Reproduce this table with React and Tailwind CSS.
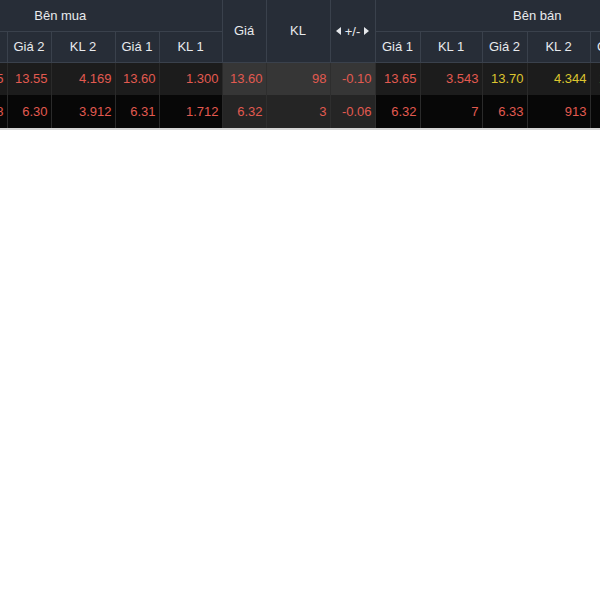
import React from "react";

const buyCols = ["Giá 3", "KL 3", "Giá 2", "KL 2", "Giá 1", "KL 1"];
const sellCols = ["Giá 1", "KL 1", "Giá 2", "KL 2", "Giá 3", "KL 3"];

// column widths in px, table is scrolled so Bên mua's first two columns sit off to the left
const widths = [44, 64, 44, 64, 44, 63, 44, 64, 45, 45, 62, 45, 63, 45, 64];

const rows = [
  {
    buy: ["13.50", "2.385", "13.55", "4.169", "13.60", "1.300"],
    mid: ["13.60", "98", "-0.10"],
    sell: ["13.65", "3.543", "13.70", "4.344", "13.75", "2.120"],
    sellColor: ["red", "red", "yellow", "yellow", "yellow", "yellow"],
  },
  {
    buy: ["6.29", "1.908", "6.30", "3.912", "6.31", "1.712"],
    mid: ["6.32", "3", "-0.06"],
    sell: ["6.32", "7", "6.33", "913", "6.34", "1.020"],
    sellColor: ["red", "red", "red", "red", "red", "red"],
  },
];

const color = (c) => (c === "yellow" ? "text-[#dcc52f]" : "text-[#e25a50]");

function Arrow({ dir }) {
  return (
    <svg width="5" height="8" viewBox="0 0 5 8" className="inline-block align-middle">
      {dir === "left" ? (
        <path d="M5 0 L0 4 L5 8 Z" fill="#e5e7eb" />
      ) : (
        <path d="M0 0 L5 4 L0 8 Z" fill="#e5e7eb" />
      )}
    </svg>
  );
}

export default function App() {
  return (
    <div className="w-[600px] h-[600px] bg-white overflow-hidden font-['Liberation_Sans',Arial,sans-serif]">
      <div className="overflow-hidden border-b-2 border-[#d6d6d6]">
        <table className="w-[800px] -ml-[101px] border-collapse table-fixed text-[13px] leading-none">
          <colgroup>
            {widths.map((w, i) => (
              <col key={i} style={{ width: w }} />
            ))}
          </colgroup>
          <thead className="bg-[#272d37] text-[#e8eaed]">
            <tr className="h-[31px]">
              <th colSpan={6} className="font-normal text-center border-b border-r border-[#3a414c]">
                Bên mua
              </th>
              <th rowSpan={2} className="font-normal text-center border-r border-b border-[#3a414c]">
                Giá
              </th>
              <th rowSpan={2} className="font-normal text-center border-r border-b border-[#3a414c]">
                KL
              </th>
              <th rowSpan={2} className="font-normal text-center border-r border-b border-[#3a414c]">
                <span className="inline-flex items-center gap-[4px]">
                  <Arrow dir="left" />
                  +/-
                  <Arrow dir="right" />
                </span>
              </th>
              <th colSpan={6} className="font-normal text-center border-b border-[#3a414c]">
                Bên bán
              </th>
            </tr>
            <tr className="h-[31px]">
              {buyCols.map((c, i) => (
                <th key={"b" + i} className="font-normal text-center border-r border-b border-[#3a414c]">
                  {c}
                </th>
              ))}
              {sellCols.map((c, i) => (
                <th key={"s" + i} className="font-normal text-center border-r border-b border-[#3a414c]">
                  {c}
                </th>
              ))}
            </tr>
          </thead>
          <tbody>
            {rows.map((r, ri) => {
              const bg = ri === 0 ? "bg-[#1c1c1c]" : "bg-[#070707]";
              const midBg = ri === 0 ? "bg-[#363636]" : "bg-[#252525]";
              return (
                <tr key={ri} className={"h-[33px] " + bg}>
                  {r.buy.map((v, i) => (
                    <td key={"b" + i} className="text-right pr-[3px] text-[#e25a50] border-r border-[#2a2a2a]">
                      {v}
                    </td>
                  ))}
                  {r.mid.map((v, i) => (
                    <td key={"m" + i} className={"text-right pr-[3px] text-[#e25a50] border-r border-[#2e2e2e] " + midBg}>
                      {v}
                    </td>
                  ))}
                  {r.sell.map((v, i) => (
                    <td key={"s" + i} className={"text-right pr-[3px] border-r border-[#2a2a2a] " + color(r.sellColor[i])}>
                      {v}
                    </td>
                  ))}
                </tr>
              );
            })}
          </tbody>
        </table>
      </div>
    </div>
  );
}
